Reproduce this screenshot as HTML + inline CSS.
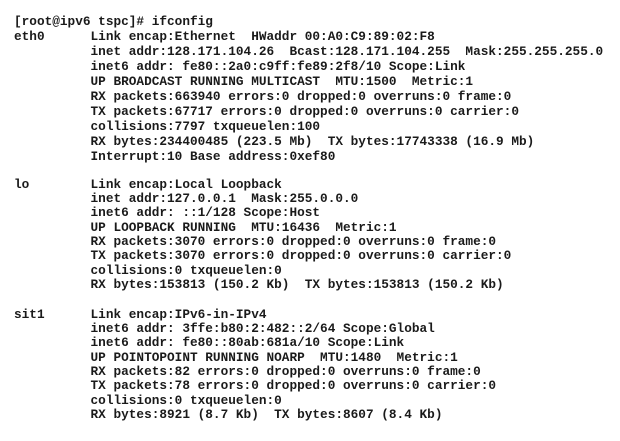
<!DOCTYPE html>
<html><head><meta charset="utf-8"><style>
html,body{margin:0;padding:0;background:#fff;width:620px;height:441px;overflow:hidden}
pre{position:absolute;left:14px;margin:0;font-family:"Liberation Mono",monospace;font-weight:bold;font-size:12.75px;color:#1a1a1a;white-space:pre}
#a{top:13.5px;line-height:15.1px}
#b{top:177.8px;line-height:14.3px}
#c{top:307.8px;line-height:14.3px}
</style></head><body>
<pre id="a">[root@ipv6 tspc]# ifconfig
eth0      Link encap:Ethernet  HWaddr 00:A0:C9:89:02:F8
          inet addr:128.171.104.26  Bcast:128.171.104.255  Mask:255.255.255.0
          inet6 addr: fe80::2a0:c9ff:fe89:2f8/10 Scope:Link
          UP BROADCAST RUNNING MULTICAST  MTU:1500  Metric:1
          RX packets:663940 errors:0 dropped:0 overruns:0 frame:0
          TX packets:67717 errors:0 dropped:0 overruns:0 carrier:0
          collisions:7797 txqueuelen:100
          RX bytes:234400485 (223.5 Mb)  TX bytes:17743338 (16.9 Mb)
          Interrupt:10 Base address:0xef80</pre>
<pre id="b">lo        Link encap:Local Loopback
          inet addr:127.0.0.1  Mask:255.0.0.0
          inet6 addr: ::1/128 Scope:Host
          UP LOOPBACK RUNNING  MTU:16436  Metric:1
          RX packets:3070 errors:0 dropped:0 overruns:0 frame:0
          TX packets:3070 errors:0 dropped:0 overruns:0 carrier:0
          collisions:0 txqueuelen:0
          RX bytes:153813 (150.2 Kb)  TX bytes:153813 (150.2 Kb)</pre>
<pre id="c">sit1      Link encap:IPv6-in-IPv4
          inet6 addr: 3ffe:b80:2:482::2/64 Scope:Global
          inet6 addr: fe80::80ab:681a/10 Scope:Link
          UP POINTOPOINT RUNNING NOARP  MTU:1480  Metric:1
          RX packets:82 errors:0 dropped:0 overruns:0 frame:0
          TX packets:78 errors:0 dropped:0 overruns:0 carrier:0
          collisions:0 txqueuelen:0
          RX bytes:8921 (8.7 Kb)  TX bytes:8607 (8.4 Kb)</pre>
</body></html>
